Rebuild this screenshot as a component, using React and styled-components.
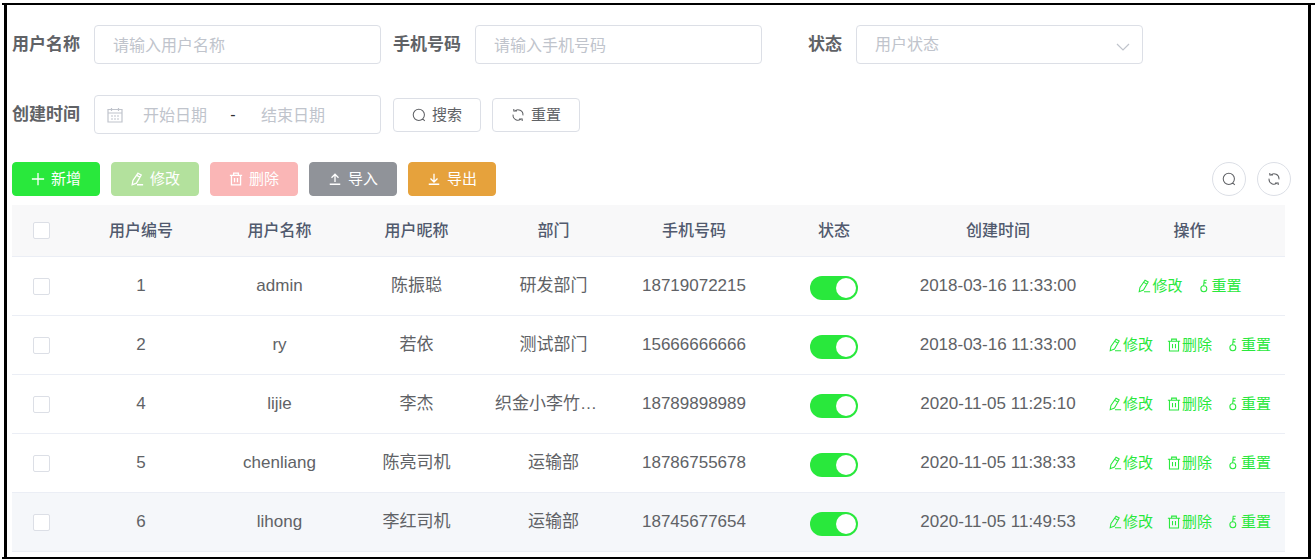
import { useState } from "react";
import styled, { createGlobalStyle } from "styled-components";

const GlobalStyle = createGlobalStyle`
  * {
    box-sizing: border-box;
  }

  body {
    margin: 0;
    background: #fff;
    color: #606266;
    font-family: "Liberation Sans", "Noto Sans CJK SC", sans-serif;
    font-size: 17px;
    line-height: 20px;
  }

  button,
  input,
  select {
    font-family: inherit;
    line-height: 20px;
  }
`;

const Page = styled.div`
  padding: 3px 0 0 2px;
`;

const Rule = styled.div`
  height: 2px;
  margin-right: ${(props) => props.$end || "0"};
  background: #000;
`;

const Frame = styled.main`
  margin: 0 4px 0 2px;
  padding: 20px 23px 5px 5px;
  border: solid #000;
  border-width: 0 3px;
`;

const SearchForm = styled.form`
  display: flex;
  flex-wrap: wrap;
  gap: 31px 12px;
  margin-right: -18px;
`;

const Field = styled.div`
  display: flex;
  align-items: center;
`;

const Label = styled.label`
  width: 82px;
  padding-right: 14px;
  text-align: right;
  white-space: nowrap;
  font-weight: 700;
`;

const Input = styled.input`
  width: 287px;
  height: 39px;
  padding: 2px 18px 0;
  border: 1px solid #dcdfe6;
  border-radius: 4px;
  color: #606266;
  font-size: 16px;
  outline: none;

  &::placeholder {
    color: #c0c4cc;
  }
`;

const SelectBox = styled.div`
  display: grid;
  align-items: center;
  color: #c0c4cc;

  > * {
    grid-area: 1 / 1;
  }

  svg {
    justify-self: end;
    margin: 4px 12px 0 0;
    pointer-events: none;
  }
`;

const Select = styled.select`
  width: 287px;
  height: 39px;
  padding: 0 18px;
  border: 1px solid #dcdfe6;
  border-radius: 4px;
  appearance: none;
  background: #fff;
  color: #c0c4cc;
  font-size: 16px;
`;

const DateRange = styled.div`
  display: flex;
  align-items: center;
  width: 287px;
  height: 39px;
  padding: 0 12px;
  border: 1px solid #dcdfe6;
  border-radius: 4px;
  color: #c0c4cc;
`;

const DateInput = styled.input`
  width: 102px;
  padding: 2px 0 0 2px;
  border: none;
  background: none;
  color: #606266;
  font-size: 16px;
  text-align: center;
  outline: none;

  &::placeholder {
    color: #c0c4cc;
  }
`;

const Separator = styled.span`
  width: 16px;
  color: #303133;
  font-size: 16px;
  text-align: center;
`;

const ButtonGroup = styled.div`
  display: flex;
  align-items: center;
  gap: 11px;
`;

const Button = styled.button`
  display: flex;
  align-items: center;
  justify-content: center;
  gap: 6px;
  width: 88px;
  height: 34px;
  padding: 0;
  border: 1px solid ${(props) => props.$color || "#dcdfe6"};
  border-radius: 4px;
  background: ${(props) => props.$color || "#fff"};
  color: ${(props) => (props.$color ? "#fff" : "#606266")};
  font-size: 15px;
  cursor: pointer;

  &:disabled {
    cursor: not-allowed;
  }
`;

const Toolbar = styled.div`
  display: flex;
  justify-content: space-between;
  margin: 28px -6px 9px 0;
`;

const RoundButton = styled(Button)`
  width: 34px;
  border-radius: 50%;
`;

const Table = styled.table`
  width: 100%;
  table-layout: fixed;
  border-collapse: separate;
  border-spacing: 0;
`;

const Th = styled.th`
  height: 52px;
  padding: 0;
  border-bottom: 1px solid #ebeef5;
  background: #f8f8f9;
  color: #515a6e;
  font-size: 16px;
  font-weight: 500;
`;

const Row = styled.tr`
  background: ${(props) => (props.$active ? "#f5f7fa" : "#fff")};
`;

const Td = styled.td`
  height: 59px;
  padding: 0 10px;
  border-bottom: 1px solid #ebeef5;
  overflow: hidden;
  text-align: center;
  text-overflow: ellipsis;
  white-space: nowrap;
`;

const Checkbox = styled.input`
  display: block;
  width: 17px;
  height: 17px;
  margin: 0 auto;
  border: 1px solid #dcdfe6;
  border-radius: 2px;
  appearance: none;
  background: #fff;

  &:checked {
    border-color: #29e83c;
    background: #29e83c;
  }
`;

const Switch = styled.input`
  display: block;
  width: 48px;
  height: 24px;
  margin: 4px auto 0;
  padding: 2px;
  border-radius: 12px;
  appearance: none;
  background: ${(props) => (props.checked ? "#29e83c" : "#dcdfe6")};
  cursor: pointer;

  &::before {
    content: "";
    display: block;
    width: 20px;
    height: 20px;
    margin-left: ${(props) => (props.checked ? "auto" : "0")};
    border-radius: 50%;
    background: #fff;
  }
`;

const Actions = styled.div`
  display: flex;
  justify-content: center;
  gap: 14px;
`;

const TextButton = styled.button`
  display: flex;
  align-items: center;
  gap: 1px;
  padding: 0;
  border: none;
  background: none;
  color: #29e83c;
  font-size: 15px;
  cursor: pointer;
`;

const icons = {
  plus: "M8 1v14M1 8h14",
  edit: "M9.2 1.4l3.6 2.1-5.4 9.2-4.9 1.9.9-4.9zM7.8 3.9l3.6 2.1M8 14.6h7",
  trash: "M1 3.8h14M5.3 3.5V1.3h5.4v2.2M2.8 4v10.8h10.4V4M6.3 6.8v5M9.7 6.8v5",
  upload: "M8 11.5V2.5M4 6.5l4-4 4 4M2 14h12",
  download: "M8 2v9.5M4 7.5l4 4 4-4M2 14h12",
  search: "M14.2 7.8a6.4 6.4 0 1 1-12.8 0 6.4 6.4 0 0 1 12.8 0zM12.2 12.4l2.4 2.2",
  refresh:
    "M2.4 7.6a5.6 5.6 0 0 0 9.6 4.6M13.6 8.4A5.6 5.6 0 0 0 4 3.8M6.8 3.4H3.2V1.2M9.2 12.6h3.6v2.2",
  key: "M11.2 11.2a3.4 3.4 0 1 1-6.8 0 3.4 3.4 0 0 1 6.8 0zM7.6 7.8l.6-6.4h3M8 4.4h2.6",
  arrow: "M2 5l6 6 6-6",
  calendar:
    "M1 2.5h14v12.5H1zM1 6h14M4.5 1v3M11.5 1v3M4 9h2M7 9h2M10 9h2M4 12h2M7 12h2M10 12h2",
};

function Icon({ name, size = 14, stroke = 1.2 }) {
  return (
    <svg
      width={size}
      height={size}
      viewBox="0 0 16 16"
      fill="none"
      stroke="currentColor"
      strokeWidth={stroke}
      aria-hidden="true"
    >
      <path d={icons[name]} />
    </svg>
  );
}

const tools = [
  { icon: "plus", text: "新增", color: "#29e83c" },
  { icon: "edit", text: "修改", color: "#b3e19d", disabled: true },
  { icon: "trash", text: "删除", color: "#fab6b6", disabled: true },
  { icon: "upload", text: "导入", color: "#909399" },
  { icon: "download", text: "导出", color: "#e6a23c" },
];

const columns = [
  { title: "用户编号", width: 140 },
  { title: "用户名称", width: 137 },
  { title: "用户昵称", width: 137 },
  { title: "部门", width: 137 },
  { title: "手机号码", width: 144 },
  { title: "状态", width: 136 },
  { title: "创建时间", width: 192 },
  { title: "操作", width: 191 },
];

const initialUsers = [
  { id: 1, name: "admin", nick: "陈振聪", dept: "研发部门", phone: "18719072215", time: "2018-03-16 11:33:00", enabled: true },
  { id: 2, name: "ry", nick: "若依", dept: "测试部门", phone: "15666666666", time: "2018-03-16 11:33:00", enabled: true },
  { id: 4, name: "lijie", nick: "李杰", dept: "织金小李竹荪店", phone: "18789898989", time: "2020-11-05 11:25:10", enabled: true },
  { id: 5, name: "chenliang", nick: "陈亮司机", dept: "运输部", phone: "18786755678", time: "2020-11-05 11:38:33", enabled: true },
  { id: 6, name: "lihong", nick: "李红司机", dept: "运输部", phone: "18745677654", time: "2020-11-05 11:49:53", enabled: true },
];

export default function App() {
  const [users, setUsers] = useState(initialUsers);
  const [selected, setSelected] = useState([]);

  const toggleUser = (id) => {
    setUsers(
      users.map((u) => (u.id === id ? { ...u, enabled: !u.enabled } : u))
    );
  };

  const toggleSelected = (id) => {
    setSelected(
      selected.includes(id)
        ? selected.filter((s) => s !== id)
        : [...selected, id]
    );
  };

  const toggleAll = () => {
    setSelected(selected.length === users.length ? [] : users.map((u) => u.id));
  };

  return (
    <Page>
      <GlobalStyle />
      <Rule />
      <Frame>
        <SearchForm onSubmit={(e) => e.preventDefault()}>
          <Field>
            <Label htmlFor="userName">用户名称</Label>
            <Input id="userName" placeholder="请输入用户名称" />
          </Field>
          <Field>
            <Label htmlFor="phone">手机号码</Label>
            <Input id="phone" placeholder="请输入手机号码" />
          </Field>
          <Field>
            <Label htmlFor="status">状态</Label>
            <SelectBox>
              <Select id="status" defaultValue="">
                <option value="">用户状态</option>
              </Select>
              <Icon name="arrow" size={16} />
            </SelectBox>
          </Field>
          <Field>
            <Label htmlFor="beginTime">创建时间</Label>
            <DateRange>
              <Icon name="calendar" size={16} />
              <DateInput id="beginTime" placeholder="开始日期" />
              <Separator>-</Separator>
              <DateInput aria-label="结束日期" placeholder="结束日期" />
            </DateRange>
          </Field>
          <ButtonGroup>
            <Button type="submit">
              <Icon name="search" />
              搜索
            </Button>
            <Button type="reset">
              <Icon name="refresh" />
              重置
            </Button>
          </ButtonGroup>
        </SearchForm>

        <Toolbar>
          <ButtonGroup>
            {tools.map((tool) => (
              <Button
                key={tool.text}
                type="button"
                $color={tool.color}
                disabled={tool.disabled}
              >
                <Icon name={tool.icon} stroke={1.5} />
                {tool.text}
              </Button>
            ))}
          </ButtonGroup>
          <ButtonGroup>
            <RoundButton type="button" aria-label="搜索">
              <Icon name="search" />
            </RoundButton>
            <RoundButton type="button" aria-label="刷新">
              <Icon name="refresh" />
            </RoundButton>
          </ButtonGroup>
        </Toolbar>

        <Table>
          <colgroup>
            <col width={59} />
            {columns.map((col) => (
              <col key={col.title} width={col.width} />
            ))}
          </colgroup>
          <thead>
            <tr>
              <Th>
                <Checkbox
                  type="checkbox"
                  aria-label="全选"
                  checked={selected.length === users.length}
                  onChange={toggleAll}
                />
              </Th>
              {columns.map((col) => (
                <Th key={col.title}>{col.title}</Th>
              ))}
            </tr>
          </thead>
          <tbody>
            {users.map((user) => (
              <Row key={user.id} $active={user.id === 6}>
                <Td>
                  <Checkbox
                    type="checkbox"
                    aria-label={user.name}
                    checked={selected.includes(user.id)}
                    onChange={() => toggleSelected(user.id)}
                  />
                </Td>
                <Td>{user.id}</Td>
                <Td>{user.name}</Td>
                <Td>{user.nick}</Td>
                <Td>{user.dept}</Td>
                <Td>{user.phone}</Td>
                <Td>
                  <Switch
                    type="checkbox"
                    role="switch"
                    aria-label="状态"
                    checked={user.enabled}
                    onChange={() => toggleUser(user.id)}
                  />
                </Td>
                <Td>{user.time}</Td>
                <Td>
                  <Actions>
                    <TextButton type="button">
                      <Icon name="edit" />
                      修改
                    </TextButton>
                    {user.id !== 1 && (
                      <TextButton type="button">
                        <Icon name="trash" />
                        删除
                      </TextButton>
                    )}
                    <TextButton type="button">
                      <Icon name="key" />
                      重置
                    </TextButton>
                  </Actions>
                </Td>
              </Row>
            ))}
          </tbody>
        </Table>
      </Frame>
      <Rule $end="4px" />
    </Page>
  );
}
